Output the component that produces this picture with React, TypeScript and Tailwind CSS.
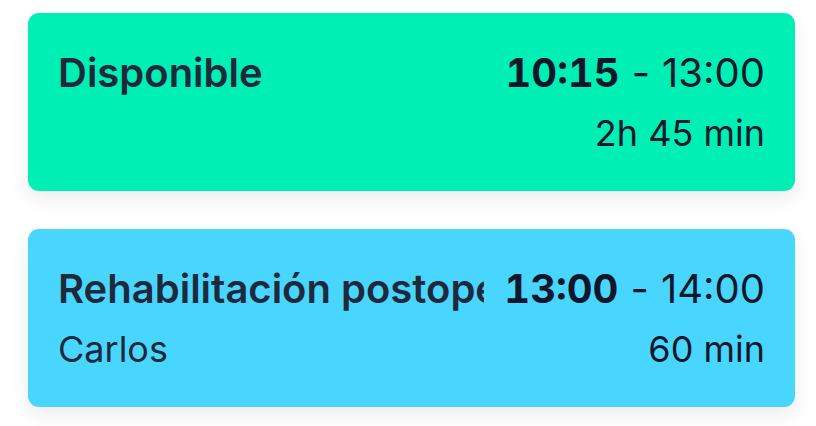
import React from 'react';

type Slot = {
  title: string;
  subtitle?: string;
  start: string;
  end: string;
  duration: string;
  color: string;
};

const slots: Slot[] = [
  { title: 'Disponible', start: '10:15', end: '13:00', duration: '2h 45 min', color: 'bg-[#00efb5]' },
  {
    title: 'Rehabilitación postoperatoria',
    subtitle: 'Carlos',
    start: '13:00',
    end: '14:00',
    duration: '60 min',
    color: 'bg-[#48d6ff]',
  },
];

function SlotCard({ slot }: { slot: Slot }) {
  return (
    <div
      className={`${slot.color} h-[178px] rounded-[11px] px-[30px] pt-[30px] shadow-[0_8px_20px_rgba(0,0,0,0.08)]`}
    >
      <div className="flex items-baseline gap-[20px] text-[40px] leading-[60px]">
        <div className="min-w-0 flex-1 overflow-hidden whitespace-nowrap font-semibold text-[#1e293b]">
          {slot.title}
        </div>
        <div className="flex shrink-0 items-baseline whitespace-nowrap text-[#0f172a]">
          <span className="font-bold tabular-nums">{slot.start}</span>
          <span className="mx-[12px]">-</span>
          <span>{slot.end}</span>
        </div>
      </div>
      <div className="flex items-baseline justify-between text-[36px] leading-[60px] text-[#0f172a]">
        <span className="text-[#1e293b]">{slot.subtitle ?? ''}</span>
        <span>{slot.duration}</span>
      </div>
    </div>
  );
}

export default function App() {
  return (
    <div className="min-h-screen bg-white pt-[13px] pl-[28px] font-['Inter',sans-serif]">
      <div className="flex w-[767px] flex-col gap-[38px]">
        {slots.map((s) => (
          <SlotCard key={s.start} slot={s} />
        ))}
      </div>
    </div>
  );
}
